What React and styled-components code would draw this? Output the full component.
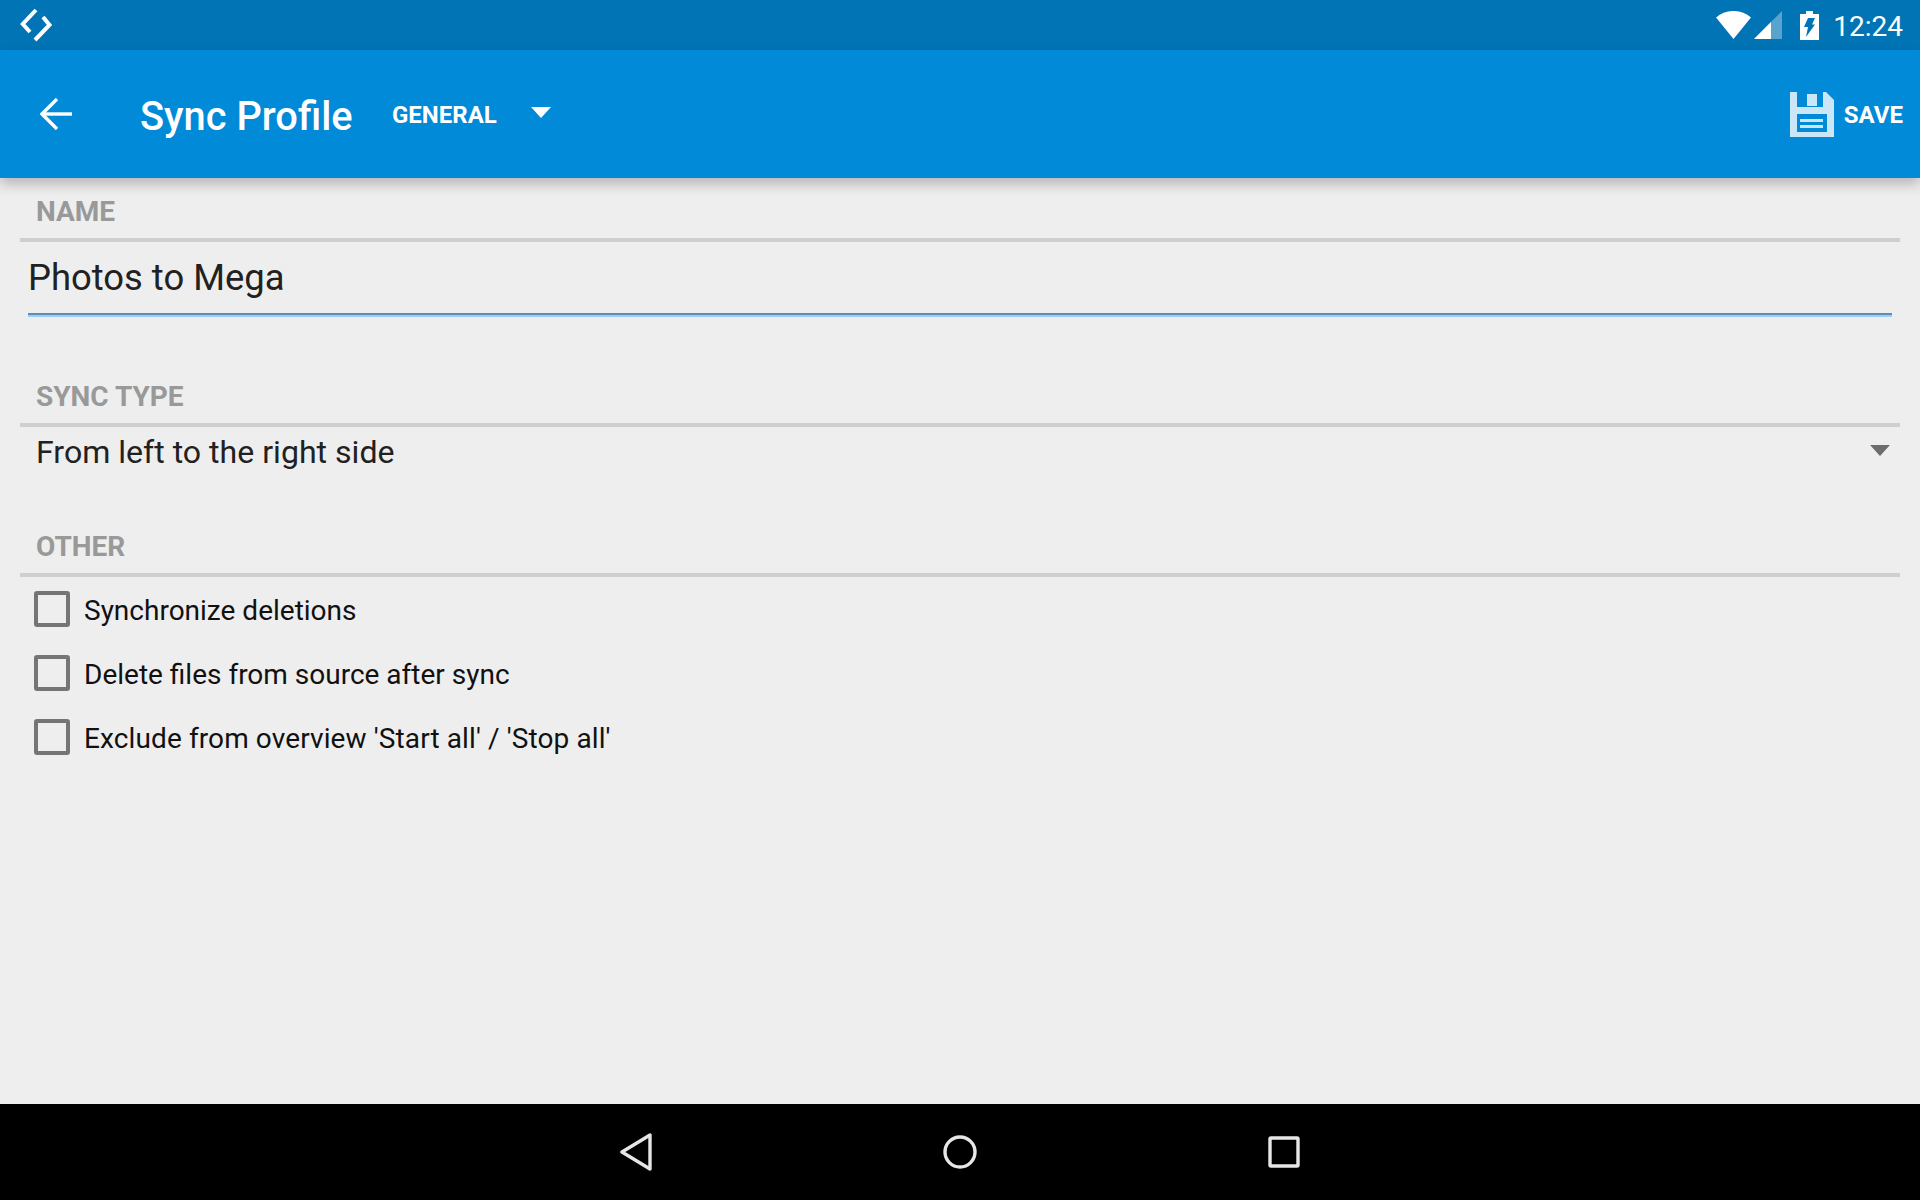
import React from 'react';
import styled, { createGlobalStyle } from 'styled-components';

const GlobalStyle = createGlobalStyle`
  html, body {
    margin: 0;
    padding: 0;
    background: #eeeeee;
  }
  body {
    font-family: Roboto, "Liberation Sans", sans-serif;
  }
`;

const Screen = styled.div`
  display: flex;
  flex-direction: column;
  width: 1920px;
  height: 1200px;
  overflow: hidden;
  background: #eeeeee;
`;

const StatusBar = styled.div`
  display: flex;
  align-items: center;
  justify-content: space-between;
  flex: 0 0 50px;
  padding: 0 17px 0 20px;
  background: #0174b5;
  color: #fff;
`;

const StatusGroup = styled.div`
  display: flex;
  align-items: center;
`;

const Clock = styled.span`
  margin: 3px 0 0 14px;
  font-size: 28px;
  line-height: 47px;
`;

const Toolbar = styled.header`
  position: relative;
  z-index: 1;
  display: flex;
  align-items: center;
  flex: 0 0 128px;
  padding: 0 17px 0 40px;
  background: #018ad8;
  color: #fff;
  box-shadow: 0 6px 12px rgba(0, 0, 0, 0.24);
`;

const Title = styled.h1`
  width: 212px;
  margin: 6px 40px 0 68px;
  font-size: 39.8px;
  font-weight: 500;
  line-height: 48px;
  white-space: nowrap;
`;

const ActionText = styled.span`
  margin-top: 2px;
  font-size: 24px;
  font-weight: 700;
  line-height: 32px;
`;

const TabCaret = styled.svg`
  margin: 0 0 3px 34px;
`;

const SaveButton = styled.div`
  display: flex;
  align-items: center;
  gap: 10px;
  margin-left: auto;
`;

const Content = styled.main`
  flex: 1;
  padding: 18px 20px 0;
`;

const SectionLabel = styled.div`
  margin-top: ${(p) => p.$top || 0}px;
  padding: 0 16px 10px;
  border-bottom: 4px solid #cfcfcf;
  color: #999999;
  font-size: 28px;
  font-weight: 700;
  line-height: 32px;
`;

const NameField = styled.div`
  margin: 14px 8px 0;
  padding-bottom: 13px;
  border-bottom: 2px solid #5c8dbc;
  box-shadow: 0 2px 0 #9fcdf0;
  color: #212121;
  font-size: 36.4px;
  line-height: 44px;
`;

const SelectRow = styled.div`
  display: flex;
  align-items: center;
  justify-content: space-between;
  margin-top: 5px;
  padding: 0 10px 0 16px;
  color: #212121;
  font-size: 32.1px;
  line-height: 40px;
`;

const SelectCaret = styled.svg`
  margin-bottom: 3px;
`;

const CheckRow = styled.label`
  display: flex;
  align-items: center;
  height: 64px;
  padding-left: 14px;
  color: #111111;
  font-size: 28px;
`;

const CheckBox = styled.span`
  box-sizing: border-box;
  flex: 0 0 36px;
  height: 36px;
  margin-right: 14px;
  border: 4px solid #757575;
  border-radius: 3px;
`;

const CheckText = styled.span`
  margin-top: 2px;
  letter-spacing: ${(p) => p.$spacing || 0}px;
`;

const NavBar = styled.nav`
  display: flex;
  align-items: center;
  justify-content: center;
  flex: 0 0 96px;
  background: #000;
`;

const NavSlot = styled.div`
  display: flex;
  justify-content: center;
  width: 324px;
`;

const checks = [
  { text: 'Synchronize deletions' },
  { text: 'Delete files from source after sync' },
  { text: "Exclude from overview 'Start all' / 'Stop all'", spacing: 0.11 },
];

const AppGlyph = () => (
  <svg width="34" height="34" viewBox="0 0 34 34" fill="none" stroke="#fff" strokeWidth="4">
    <path d="M16 2 L2.8 16 L10 24" />
    <path d="M23 9 L29.5 17 L15 32" />
  </svg>
);

const WifiIcon = () => (
  <svg width="35" height="28" viewBox="0 0 35 28">
    <path d="M0 6.5 C10 -2.2 25 -2.2 35 6.5 L17.5 28 Z" fill="#fff" />
  </svg>
);

const SignalIcon = () => (
  <svg width="28" height="28" viewBox="0 0 28 28" style={{ marginLeft: 3 }}>
    <path d="M0 28 L28 0 V28 Z" fill="#fff" fillOpacity="0.35" />
    <path d="M0 28 L17 11 V28 Z" fill="#fff" />
  </svg>
);

const BatteryIcon = () => (
  <svg width="19" height="29" viewBox="0 0 19 29" style={{ marginLeft: 18 }}>
    <path d="M6 0 H13 V3 H19 V29 H0 V3 H6 Z" fill="#fff" />
    <path d="M8 7 H15 L12 13.5 H15 L6 26 L8 16 H4 Z" fill="#0174b5" />
  </svg>
);

const BackArrow = () => (
  <svg width="32" height="32" viewBox="0 0 32 32" fill="none" stroke="#fff" strokeWidth="3.4">
    <path d="M32 16 H3" />
    <path d="M17 1 L2 16 L17 31" />
  </svg>
);

const FloppyIcon = () => (
  <svg width="44" height="45" viewBox="0 0 44 45">
    <path d="M0 0 H36 L44 8 V45 H0 Z" fill="#cbe6f7" />
    <path d="M7 0 H33 V15 H7 Z" fill="#018ad8" />
    <path d="M17 2 H27 V14 H17 Z" fill="#cbe6f7" />
    <path d="M7 22 H37 V40 H7 Z" fill="#018ad8" />
    <path d="M10 27 H33 V30 H10 Z M10 33 H33 V36 H10 Z" fill="#cbe6f7" />
  </svg>
);

const NavBack = () => (
  <svg width="34" height="38" viewBox="0 0 34 38" fill="none" stroke="#e6e6e6" strokeWidth="3.4" strokeLinejoin="round">
    <path d="M31 2 V36 L3 19 Z" />
  </svg>
);

const NavHome = () => (
  <svg width="34" height="34" viewBox="0 0 34 34" fill="none" stroke="#e6e6e6" strokeWidth="3.4">
    <circle cx="17" cy="17" r="15" />
  </svg>
);

const NavRecent = () => (
  <svg width="32" height="32" viewBox="0 0 32 32" fill="none" stroke="#e6e6e6" strokeWidth="3.4" strokeLinejoin="round">
    <rect x="2" y="2" width="28" height="28" rx="1" />
  </svg>
);

const App = () => (
  <Screen>
    <GlobalStyle />
    <StatusBar>
      <AppGlyph />
      <StatusGroup>
        <WifiIcon />
        <SignalIcon />
        <BatteryIcon />
        <Clock>12:24</Clock>
      </StatusGroup>
    </StatusBar>

    <Toolbar>
      <BackArrow />
      <Title>Sync Profile</Title>
      <ActionText>GENERAL</ActionText>
      <TabCaret width="20" height="11" viewBox="0 0 20 11">
        <path d="M0 0 H20 L10 11 Z" fill="#fff" />
      </TabCaret>
      <SaveButton>
        <FloppyIcon />
        <ActionText>SAVE</ActionText>
      </SaveButton>
    </Toolbar>

    <Content>
      <SectionLabel>NAME</SectionLabel>
      <NameField>Photos to Mega</NameField>

      <SectionLabel $top={66}>SYNC TYPE</SectionLabel>
      <SelectRow>
        From left to the right side
        <SelectCaret width="20" height="11" viewBox="0 0 20 11">
          <path d="M0 0 H20 L10 11 Z" fill="#6d6d6d" />
        </SelectCaret>
      </SelectRow>

      <SectionLabel $top={59}>OTHER</SectionLabel>
      {checks.map(({ text, spacing }) => (
        <CheckRow key={text}>
          <CheckBox />
          <CheckText $spacing={spacing}>{text}</CheckText>
        </CheckRow>
      ))}
    </Content>

    <NavBar>
      <NavSlot>
        <NavBack />
      </NavSlot>
      <NavSlot>
        <NavHome />
      </NavSlot>
      <NavSlot>
        <NavRecent />
      </NavSlot>
    </NavBar>
  </Screen>
);

export default App;
